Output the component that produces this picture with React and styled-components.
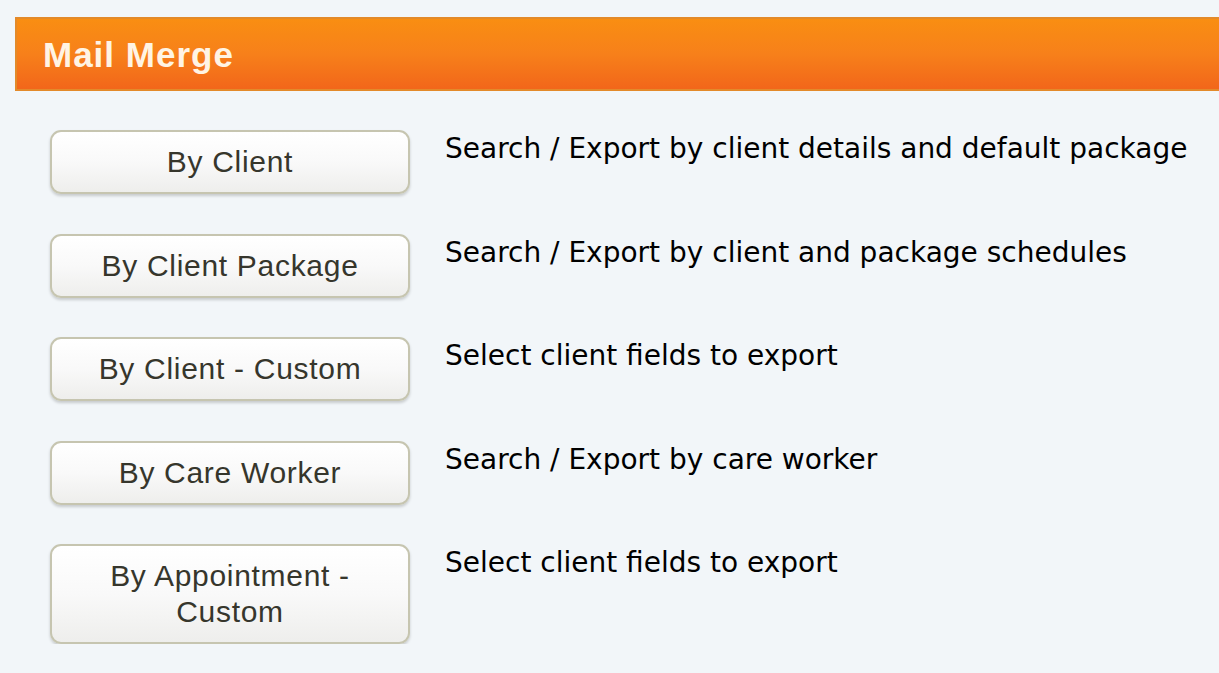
import React from "react";
import styled, { createGlobalStyle } from "styled-components";

const Global = createGlobalStyle`
  html, body { margin: 0; padding: 0; background: #f2f6f9; overflow: hidden; }
  body { font-family: "Liberation Sans", Arial, sans-serif; }
`;

const Page = styled.div`
  padding: 17px 0 0 15px;
`;

const Header = styled.div`
  margin-right: -20px;
  height: 74px;
  box-sizing: border-box;
  border: 2px solid #e38a2a;
  background: linear-gradient(to bottom, #f98e12 0%, #f7801a 50%, #f2661a 100%);
  display: flex;
  align-items: center;
  padding-left: 26px;
`;

const Title = styled.h1`
  margin: 0;
  font-family: "Liberation Sans", Arial, sans-serif;
  font-weight: bold;
  font-size: 35px;
  letter-spacing: 1px;
  color: #fff4e4;
  line-height: 1;
`;

const List = styled.div`
  display: flex;
  flex-direction: column;
  gap: 39.5px;
  padding: 39px 0 0 35px;
`;

const Row = styled.div`
  display: flex;
  align-items: flex-start;
  gap: 35px;
`;

const Button = styled.button`
  width: 360px;
  box-sizing: border-box;
  padding: 12px 20px;
  border: 2px solid #c6c5b0;
  border-radius: 11px;
  background: linear-gradient(to bottom, #ffffff 0%, #f9f9f9 50%, #eeeeec 100%);
  box-shadow: 0 2px 3px rgba(0, 0, 0, 0.18);
  font-family: "Liberation Sans", Arial, sans-serif;
  font-size: 30px;
  letter-spacing: 0.7px;
  line-height: 36px;
  color: #36362c;
  text-align: center;
  cursor: pointer;
`;

const Desc = styled.p`
  margin: 2px 0 0;
  font-family: "DejaVu Sans", Verdana, sans-serif;
  font-size: 28px;
  line-height: 33px;
  color: #000;
`;

const items = [
  ["By Client", "Search / Export by client details and default package"],
  ["By Client Package", "Search / Export by client and package schedules"],
  ["By Client - Custom", "Select client fields to export"],
  ["By Care Worker", "Search / Export by care worker"],
  [["By Appointment -", "Custom"], "Select client fields to export"],
];

export default function App() {
  return (
    <>
      <Global />
      <Page>
        <Header>
          <Title>Mail Merge</Title>
        </Header>
        <List>
          {items.map(([label, desc], i) => (
            <Row key={i}>
              <Button>
                {Array.isArray(label)
                  ? label.map((l, j) => (
                      <React.Fragment key={j}>
                        {j > 0 && <br />}
                        {l}
                      </React.Fragment>
                    ))
                  : label}
              </Button>
              <Desc>{desc}</Desc>
            </Row>
          ))}
        </List>
      </Page>
    </>
  );
}
